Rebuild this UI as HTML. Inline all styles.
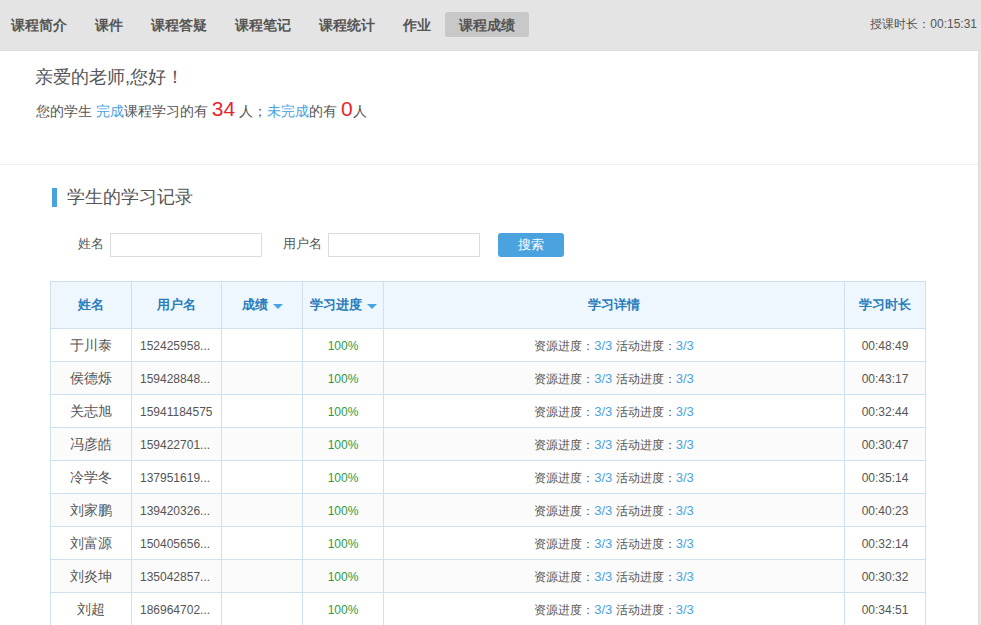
<!DOCTYPE html>
<html><head><meta charset="utf-8">
<style>
*{margin:0;padding:0;box-sizing:border-box;}
html,body{width:981px;height:625px;overflow:hidden;background:#e4e4e4;font-family:"Liberation Sans",sans-serif;color:#555;}
.nav{position:absolute;left:0;top:0;width:981px;height:51px;background:#e4e4e4;border-bottom:1px solid #dedede;}
.nav .it{position:absolute;top:12px;height:25px;line-height:27px;font-size:14px;font-weight:bold;color:#555;padding:0 14px;border-radius:3px;white-space:nowrap;}
.nav .it.act{background:#c8c8c8;}
.nav .time{position:absolute;right:4px;top:16px;font-size:12px;line-height:16px;color:#555;white-space:nowrap;}
.main{position:absolute;left:0;top:51px;width:979px;height:574px;background:#fff;border-right:1px solid #dcdcdc;}
.hello{position:absolute;left:35px;top:14px;font-size:18px;line-height:24px;color:#555;white-space:nowrap;}
.sum{position:absolute;left:36px;top:46px;font-size:14px;line-height:24px;color:#555;white-space:nowrap;}
.blue{color:#4aa3df;}
.red{color:#e5262c;font-size:21px;}
.hr{position:absolute;left:0;top:113px;width:978px;height:1px;background:#efefef;}
.ttl{position:absolute;left:52px;top:137px;height:19px;border-left:5px solid #4aa3df;}
.ttl span{position:absolute;left:10px;top:-3px;font-size:18px;line-height:24px;white-space:nowrap;color:#555;}
.lbl{position:absolute;font-size:13px;line-height:16px;top:185px;white-space:nowrap;color:#555;}
.inp{position:absolute;top:182px;height:24px;width:152px;border:1px solid #dcdcdc;background:#fff;}
.btn{position:absolute;left:498px;top:182px;width:66px;height:24px;background:#4aa3df;border-radius:3px;color:#fff;font-size:13px;line-height:24px;text-align:center;}
table{position:absolute;left:50px;top:230px;border-collapse:collapse;table-layout:fixed;}
td,th{border:1px solid #cfe1ee;text-align:center;white-space:nowrap;overflow:hidden;}
th{height:47px;background:#edf7fd;color:#2a7cbc;font-size:13px;font-weight:bold;}
td{height:33px;font-size:12px;color:#555;padding-top:2px;}
td .blue{font-size:13px;}
tr.g td{background:#fbfbfb;}
td.nm{font-size:14px;}
td.un{text-align:left;padding-left:8px;}
td.pc{color:#2f9a3f;}
.tri{display:inline-block;width:0;height:0;border-left:5px solid transparent;border-right:5px solid transparent;border-top:5px solid #4aa3df;vertical-align:middle;margin-left:5px;position:relative;top:1px;}
</style></head><body>
<div class="nav">
  <div class="it" style="left:-3px">课程简介</div>
  <div class="it" style="left:81px">课件</div>
  <div class="it" style="left:137px">课程答疑</div>
  <div class="it" style="left:221px">课程笔记</div>
  <div class="it" style="left:305px">课程统计</div>
  <div class="it" style="left:389px">作业</div>
  <div class="it act" style="left:445px">课程成绩</div>
  <div class="time">授课时长：00:15:31</div>
</div>
<div class="main">
  <div class="hello">亲爱的老师,您好！</div>
  <div class="sum">您的学生 <span class="blue">完成</span>课程学习的有 <span class="red">34</span> 人；<span class="blue">未完成</span>的有 <span class="red">0</span>人</div>
  <div class="hr"></div>
  <div class="ttl"><span>学生的学习记录</span></div>
  <div class="lbl" style="left:78px">姓名</div>
  <div class="inp" style="left:110px"></div>
  <div class="lbl" style="left:283px">用户名</div>
  <div class="inp" style="left:328px"></div>
  <div class="btn">搜索</div>
  <table>
    <colgroup><col style="width:81px"><col style="width:90px"><col style="width:81px"><col style="width:81px"><col style="width:461px"><col style="width:81px"></colgroup>
    <tr><th>姓名</th><th>用户名</th><th>成绩<i class="tri"></i></th><th>学习进度<i class="tri"></i></th><th>学习详情</th><th>学习时长</th></tr>
    <tr><td class="nm">于川泰</td><td class="un">152425958...</td><td></td><td class="pc">100%</td><td>资源进度：<span class="blue">3/3</span> 活动进度：<span class="blue">3/3</span></td><td>00:48:49</td></tr>
    <tr class="g"><td class="nm">侯德烁</td><td class="un">159428848...</td><td></td><td class="pc">100%</td><td>资源进度：<span class="blue">3/3</span> 活动进度：<span class="blue">3/3</span></td><td>00:43:17</td></tr>
    <tr><td class="nm">关志旭</td><td class="un">15941184575</td><td></td><td class="pc">100%</td><td>资源进度：<span class="blue">3/3</span> 活动进度：<span class="blue">3/3</span></td><td>00:32:44</td></tr>
    <tr class="g"><td class="nm">冯彦皓</td><td class="un">159422701...</td><td></td><td class="pc">100%</td><td>资源进度：<span class="blue">3/3</span> 活动进度：<span class="blue">3/3</span></td><td>00:30:47</td></tr>
    <tr><td class="nm">冷学冬</td><td class="un">137951619...</td><td></td><td class="pc">100%</td><td>资源进度：<span class="blue">3/3</span> 活动进度：<span class="blue">3/3</span></td><td>00:35:14</td></tr>
    <tr class="g"><td class="nm">刘家鹏</td><td class="un">139420326...</td><td></td><td class="pc">100%</td><td>资源进度：<span class="blue">3/3</span> 活动进度：<span class="blue">3/3</span></td><td>00:40:23</td></tr>
    <tr><td class="nm">刘富源</td><td class="un">150405656...</td><td></td><td class="pc">100%</td><td>资源进度：<span class="blue">3/3</span> 活动进度：<span class="blue">3/3</span></td><td>00:32:14</td></tr>
    <tr class="g"><td class="nm">刘炎坤</td><td class="un">135042857...</td><td></td><td class="pc">100%</td><td>资源进度：<span class="blue">3/3</span> 活动进度：<span class="blue">3/3</span></td><td>00:30:32</td></tr>
    <tr><td class="nm">刘超</td><td class="un">186964702...</td><td></td><td class="pc">100%</td><td>资源进度：<span class="blue">3/3</span> 活动进度：<span class="blue">3/3</span></td><td>00:34:51</td></tr>
    
  </table>
</div>
</body></html>
